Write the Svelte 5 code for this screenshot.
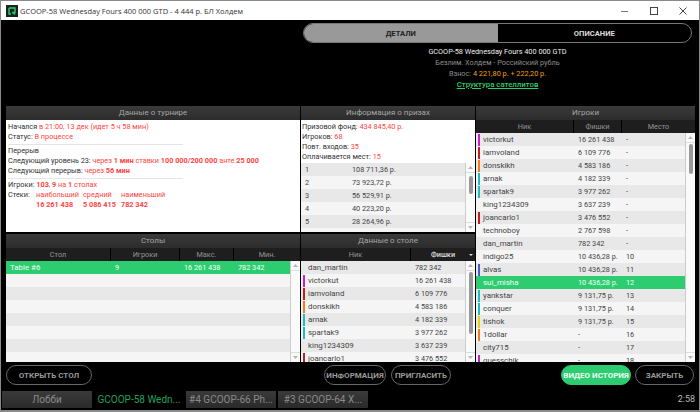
<script>
	const tables = [{ name: 'Table #6', players: '9', max: '16 261 438', min: '782 342' }];
	const emptyRows = Array(7);

	const prizes = [
		['1', '108 711,36 р.'],
		['2', '73 923,72 р.'],
		['3', '56 529,91 р.'],
		['4', '40 223,20 р.'],
		['5', '28 264,96 р.'],
		['6', '20 000,00 р.']
	];

	const seated = [
		{ nick: 'dan_martin', chips: '782 342' },
		{ nick: 'victorkut', chips: '16 261 438', color: '#c81fd0' },
		{ nick: 'iamvoland', chips: '6 109 776', color: '#c0211f' },
		{ nick: 'donskikh', chips: '4 583 186', color: '#f57c17' },
		{ nick: 'arnak', chips: '4 182 339', color: '#19bfc4' },
		{ nick: 'spartak9', chips: '3 977 262', color: '#19bfc4' },
		{ nick: 'king1234309', chips: '3 637 239' },
		{ nick: 'joancarlo1', chips: '3 476 552', color: '#c0211f' }
	];

	const players = [
		{ nick: 'victorkut', chips: '16 261 438', place: '-', color: '#c81fd0' },
		{ nick: 'iamvoland', chips: '6 109 776', place: '-', color: '#c0211f' },
		{ nick: 'donskikh', chips: '4 583 186', place: '-', color: '#f57c17' },
		{ nick: 'arnak', chips: '4 182 339', place: '-', color: '#19bfc4' },
		{ nick: 'spartak9', chips: '3 977 262', place: '-', color: '#19bfc4' },
		{ nick: 'king1234309', chips: '3 637 239', place: '-' },
		{ nick: 'joancarlo1', chips: '3 476 552', place: '-', color: '#c0211f' },
		{ nick: 'technoboy', chips: '2 767 598', place: '-' },
		{ nick: 'dan_martin', chips: '782 342', place: '-' },
		{ nick: 'indigo25', chips: '10 436,28 р.', place: '10' },
		{ nick: 'alvas', chips: '10 436,28 р.', place: '11', color: '#3f5fd8' },
		{ nick: 'sui_misha', chips: '10 436,28 р.', place: '12', active: true },
		{ nick: 'yankstar', chips: '9 131,75 р.', place: '13', color: '#19bfc4' },
		{ nick: 'conquer', chips: '9 131,75 р.', place: '14', color: '#19bfc4' },
		{ nick: 'tishok', chips: '9 131,75 р.', place: '15', color: '#e6cf14' },
		{ nick: '1dollar', chips: '-', place: '16', color: '#f57c17' },
		{ nick: 'city715', chips: '-', place: '17' },
		{ nick: 'guesschik', chips: '-', place: '18', color: '#c81fd0' }
	];

	const tabs = ['Лобби', 'GCOOP-58 Wedn...', '#4 GCOOP-66 Ph...', '#3 GCOOP-64 X...'];
</script>

{#snippet scrollbar(thumbTop, thumbHeight)}
	<div class="scroll">
		<svg class="arrow up" width="9" height="9" viewBox="0 0 9 9"><path d="M4.5 3 L7 6 L2 6 Z" fill="#b5b5b5" /></svg>
		<div class="track">
			{#if thumbHeight}
				<div class="thumb" style="margin-top:{thumbTop}px;height:{thumbHeight}px"></div>
			{/if}
		</div>
		<svg class="arrow down" width="9" height="9" viewBox="0 0 9 9"><path d="M4.5 6 L7 3 L2 3 Z" fill="#b5b5b5" /></svg>
	</div>
{/snippet}

<div class="window">
	<header class="titlebar">
		<svg class="logo" width="12" height="12" viewBox="0 0 12 12">
			<rect width="12" height="12" fill="#16261f" />
			<path d="M3 3 H9 V7.5 H6 M3 3 V9 H5 M7 7.5 L9 9.5" fill="none" stroke="#2ecc71" stroke-width="1.4" />
		</svg>
		<span class="title">GCOOP-58 Wednesday Fours 400 000 GTD - 4 444 р. БЛ Холдем</span>
		<div class="controls">
			<svg width="10" height="10" viewBox="0 0 10 10"><path d="M1 5.5 H8" stroke="#777" stroke-width="1" /></svg>
			<svg width="10" height="10" viewBox="0 0 10 10"><rect x="1.5" y="1.5" width="7" height="7" fill="none" stroke="#444" /></svg>
			<svg width="10" height="10" viewBox="0 0 10 10"><path d="M1.5 1.5 L8.5 8.5 M8.5 1.5 L1.5 8.5" stroke="#444" /></svg>
		</div>
	</header>

	<section class="top">
		<div class="summary">
			<div class="switch">
				<div class="switch-item on">ДЕТАЛИ</div>
				<div class="switch-item">ОПИСАНИЕ</div>
			</div>
			<p class="name">GCOOP-58 Wednesday Fours 400 000 GTD</p>
			<p class="muted">Безлим. Холдем - Российский рубль</p>
			<p class="muted">Взнос: <span class="fee">4 221,80 р. + 222,20 р.</span></p>
			<p><a class="link" href="#s">Структура сателлитов</a></p>
		</div>
	</section>

	<main class="panels">
		<section class="panel">
			<h2>Данные о турнире</h2>
			<div class="body info">
				<p>Начался <em>в 21:00, 13 дек (идет 5 ч 58 мин)</em></p>
				<p>Статус: <em>В процессе</em></p>
				<hr />
				<p>Перерыв</p>
				<p>Следующий уровень 23: <em>через <b>1 мин</b> ставки <b>100 000/200 000</b> анте <b>25 000</b></em></p>
				<p>Следующий перерыв: <em>через <b>56 мин</b></em></p>
				<hr />
				<p>Игроки: <em><b>103</b>, <b>9</b> на <b>1</b> столах</em></p>
				<div class="stacks">
					<span>Стеки:</span><em>наибольший</em><em>средний</em><em>наименьший</em>
					<span></span><em><b>16 261 438</b></em><em><b>5 086 415</b></em><em><b>782 342</b></em>
				</div>
			</div>
		</section>

		<section class="panel">
			<h2>Информация о призах</h2>
			<div class="body prize-body">
				<div class="prize-info">
					<p>Призовой фонд: <em>434 845,40 р.</em></p>
					<p>Игроков: <em>68</em></p>
					<p>Повт. входов: <em>35</em></p>
					<p>Оплачивается мест: <em>15</em></p>
				</div>
				<div class="list">
					<div class="rows">
						{#each prizes as [place, sum]}
							<div class="row">
								<span class="prize-place">{place}</span>
								<span>{sum}</span>
							</div>
						{/each}
					</div>
					{@render scrollbar(3, 18)}
				</div>
			</div>
		</section>

		<section class="panel players">
			<h2>Игроки</h2>
			<div class="cols">
				<span style="width:98px">Ник</span>
				<span style="width:48px">Фишки</span>
				<span class="grow">Место</span>
			</div>
			<div class="list">
				<div class="rows">
					{#each players as p}
						<div class="row" class:active={p.active}>
							<i class="bar" style="background:{p.color ?? 'transparent'}"></i>
							<span class="p-nick">{p.nick}</span>
							<span class="p-chips">{p.chips}</span>
							<span>{p.place}</span>
						</div>
					{/each}
				</div>
				{@render scrollbar(1, 30)}
			</div>
		</section>

		<section class="panel">
			<h2>Столы</h2>
			<div class="cols">
				<span style="width:105px">Стол</span>
				<span style="width:69px">Игроки</span>
				<span style="width:54px">Макс.</span>
				<span class="grow">Мин.</span>
			</div>
			<div class="list">
				<div class="rows blank">
					{#each tables as t}
						<div class="row active">
							<span class="t-name">{t.name}</span>
							<span class="t-players">{t.players}</span>
							<span class="t-max">{t.max}</span>
							<span>{t.min}</span>
						</div>
					{/each}
					{#each emptyRows as _}
						<div class="row"></div>
					{/each}
				</div>
				{@render scrollbar(0, 0)}
			</div>
		</section>

		<section class="panel">
			<h2>Данные о столе</h2>
			<div class="cols">
				<span style="width:110px">Ник</span>
				<span class="grow sorted">Фишки<i class="caret"></i></span>
			</div>
			<div class="list">
				<div class="rows">
					{#each seated as s}
						<div class="row">
							<i class="bar" style="background:{s.color ?? 'transparent'}"></i>
							<span class="s-nick">{s.nick}</span>
							<span>{s.chips}</span>
						</div>
					{/each}
				</div>
				{@render scrollbar(1, 62)}
			</div>
		</section>
	</main>

	<div class="actions">
		<button class="wide">ОТКРЫТЬ СТОЛ</button>
		<div class="middle">
			<button>ИНФОРМАЦИЯ</button>
			<button>ПРИГЛАСИТЬ</button>
		</div>
		<button class="green">ВИДЕО ИСТОРИЯ</button>
		<button class="close">ЗАКРЫТЬ</button>
	</div>

	<footer class="tabs">
		{#each tabs as tab, i}
			<div class="tab" class:current={i === 1}>{tab}</div>
		{/each}
		<span class="clock">2:58</span>
	</footer>
</div>

<style>
	:global(body) {
		margin: 0;
		background: #000;
	}

	.window {
		width: 700px;
		height: 412px;
		box-sizing: border-box;
		border: 1px solid #8a8a8a;
		border-width: 1px 1px 2px 1px;
		background: #000;
		display: flex;
		flex-direction: column;
		font-family: Roboto, 'Liberation Sans', sans-serif;
		font-size: 7.3px;
		overflow: hidden;
	}

	p {
		margin: 0;
	}

	.titlebar {
		height: 19px;
		flex: none;
		background: #fff;
		display: flex;
		align-items: center;
		padding-left: 5px;
		color: #333;
		font-family: 'Open Sans', sans-serif;
		font-size: 7.5px;
	}

	.logo {
		margin-right: 2px;
	}

	.controls {
		margin-left: auto;
		display: flex;
		gap: 19px;
		padding-right: 11px;
	}

	.top {
		height: 86px;
		flex: none;
		display: flex;
		justify-content: flex-end;
	}

	.summary {
		width: 389px;
		margin-right: 7px;
		margin-top: 3px;
		text-align: center;
		line-height: 11px;
		font-size: 7.3px;
	}

	.switch {
		display: flex;
		height: 20px;
		box-sizing: border-box;
		border: 1px solid #777;
		border-radius: 10px;
		overflow: hidden;
		margin-bottom: 3px;
		font-size: 7.6px;
		font-weight: 700;
		color: #ddd;
	}

	.switch-item {
		flex: 1;
		display: flex;
		align-items: center;
		justify-content: center;
	}

	.switch-item.on {
		background: #999;
		color: #222;
	}

	.name {
		color: #eee;
	}

	.muted {
		color: #8c8c8c;
	}

	.fee {
		color: #f0a010;
	}

	.link {
		color: #2ecc71;
		font-weight: 500;
		font-size: 7.8px;
	}

	.panels {
		height: 256px;
		flex: none;
		margin-left: 5px;
		display: grid;
		grid-template-columns: 294px 174px 219px;
		grid-template-rows: 126px 128px;
		column-gap: 1px;
		row-gap: 2px;
	}

	.panel {
		display: flex;
		flex-direction: column;
		min-height: 0;
		overflow: hidden;
	}

	.players {
		grid-column: 3;
		grid-row: 1 / span 2;
	}

	h2 {
		margin: 0;
		height: 14px;
		flex: none;
		background: linear-gradient(#3a3a3a, #2c2c2c);
		color: #a5a5a5;
		font-size: 8px;
		font-weight: 400;
		line-height: 14px;
		text-align: center;
	}

	.cols {
		height: 13px;
		flex: none;
		display: flex;
		background: #1e1e1e;
		color: #939393;
		line-height: 13px;
		text-align: center;
	}

	.cols span {
		border-right: 1px solid #000;
		box-sizing: border-box;
	}

	.cols .grow {
		flex: 1;
		border: none;
	}

	.sorted {
		color: #ddd;
		position: relative;
		font-weight: 500;
	}

	.caret {
		position: absolute;
		right: 2px;
		top: 6px;
		border: 2px solid transparent;
		border-top: 2px solid #ddd;
	}

	.body {
		flex: 1;
		background: #fff;
		min-height: 0;
		color: #333;
	}

	.info {
		padding: 2px 2px;
		line-height: 10px;
	}

	.info hr {
		width: 175px;
		margin: 2px 0 1px;
		border: none;
		border-top: 1px solid #e4e4e4;
	}

	em {
		font-style: normal;
		color: #f44;
	}

	.stacks {
		display: grid;
		grid-template-columns: 28px 47px 38px auto;
		justify-content: start;
		line-height: 9.5px;
	}

	.prize-body {
		display: flex;
		flex-direction: column;
	}

	.prize-info {
		padding: 2px 1px 0;
		line-height: 10px;
		height: 43px;
		flex: none;
		box-sizing: border-box;
	}

	.list {
		flex: 1;
		display: flex;
		min-height: 0;
		overflow: hidden;
		background: #fff;
	}

	.rows {
		flex: 1;
		min-width: 0;
		overflow: hidden;
		color: #444;
	}

	.rows.blank {
		background: #f5f5f5;
	}

	.row {
		height: 13px;
		display: flex;
		align-items: center;
		white-space: nowrap;
		background: #f5f5f5;
		font-size: 7.3px;
	}

	.row:nth-child(odd) {
		background: #e8e8e8;
	}

	.row.active {
		background: #2ecc71;
		color: #f0fff5;
	}

	.bar {
		width: 2px;
		height: 12px;
		margin: 0 3px 0 2px;
		flex: none;
	}

	.p-nick {
		width: 95px;
		flex: none;
		font-size: 7.9px;
	}

	.p-chips {
		width: 48px;
		flex: none;
	}

	.s-nick {
		width: 107px;
		flex: none;
		font-size: 7.9px;
	}

	.prize-place {
		width: 47px;
		margin-left: 4px;
		flex: none;
	}

	.t-name {
		width: 105px;
		margin-left: 4px;
		flex: none;
		font-size: 7.9px;
	}

	.t-players {
		width: 69px;
		flex: none;
	}

	.t-max {
		width: 54px;
		flex: none;
	}

	.scroll {
		width: 10px;
		flex: none;
		display: flex;
		flex-direction: column;
		align-items: center;
		background: #fafafa;
		border-left: 1px solid #ccc;
		box-sizing: border-box;
	}

	.track {
		flex: 1;
		width: 4px;
	}

	.thumb {
		width: 4px;
		background: #9a9a9a;
		border-radius: 2px;
	}

	.arrow {
		flex: none;
		width: 100%;
		height: 9px;
		box-sizing: content-box;
	}

	.arrow.up {
		border-bottom: 1px solid #ddd;
	}

	.arrow.down {
		border-top: 1px solid #ddd;
	}

	.actions {
		flex: none;
		height: 20px;
		margin: 3px 5px 0;
		display: flex;
	}

	button {
		height: 20px;
		box-sizing: border-box;
		border: 1px solid #666;
		border-radius: 10px;
		background: #000;
		color: #999;
		font-family: Roboto, 'Liberation Sans', sans-serif;
		font-size: 8px;
		font-weight: 700;
		padding: 0;
		width: 60px;
		white-space: nowrap;
	}

	.wide {
		width: 86px;
	}

	.middle {
		margin-left: 232px;
		display: flex;
		gap: 5px;
	}

	.middle button:first-child {
		width: 62px;
	}

	.green {
		margin-left: 110px;
		width: 70px;
		background: #2ecc71;
		border-color: #2ecc71;
		color: #f0fff5;
	}

	.close {
		margin-left: 4px;
		width: 59px;
	}

	.tabs {
		flex: none;
		height: 17px;
		margin-top: 6px;
		margin-left: 1px;
		display: flex;
		align-items: stretch;
		gap: 2px;
	}

	.tab {
		width: 90px;
		background: linear-gradient(#3a3a3a, #2a2a2a);
		color: #8a8a8a;
		font-size: 10px;
		line-height: 18px;
		text-align: center;
		white-space: nowrap;
		overflow: hidden;
	}

	.tab.current {
		background: #000;
		color: #24a05a;
	}

	.clock {
		margin-left: auto;
		margin-right: 4px;
		color: #bbb;
		line-height: 17px;
		font-size: 9px;
	}
</style>
